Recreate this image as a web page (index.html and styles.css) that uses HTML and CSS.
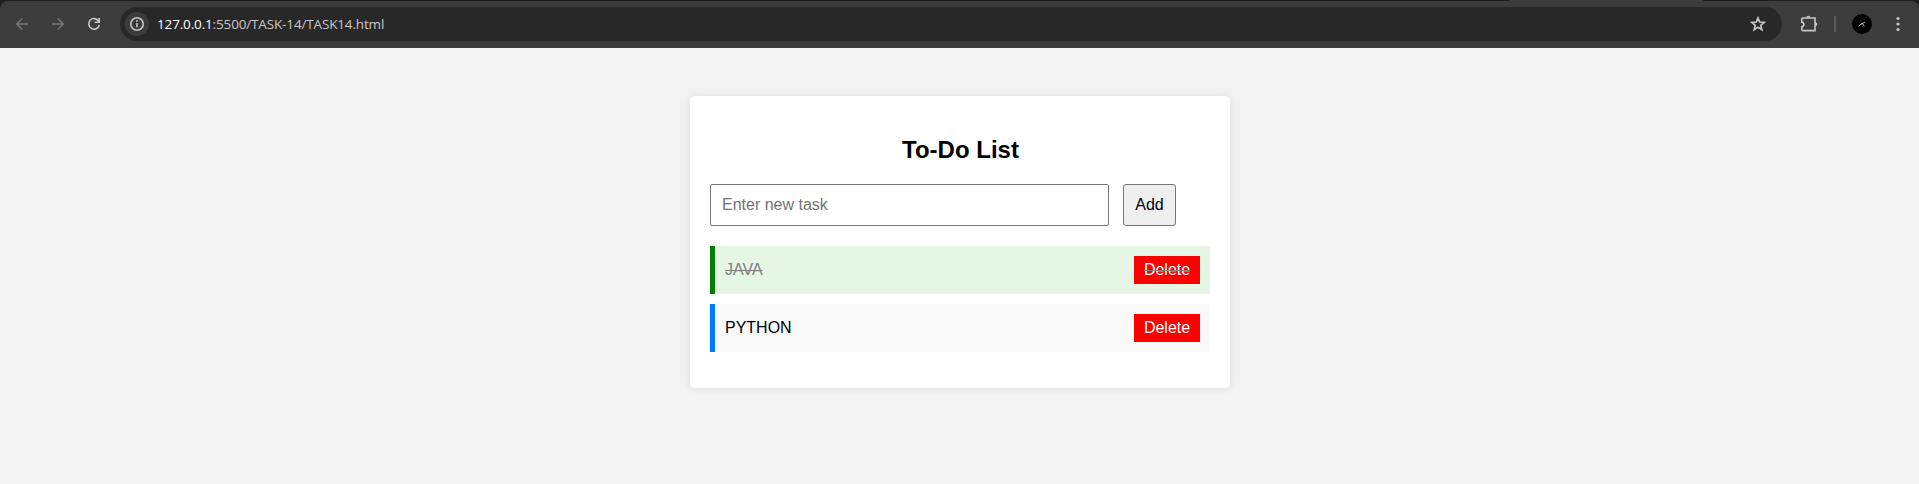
FILE: index.html
```
<!DOCTYPE html>
<html lang="en">
<head>
<meta charset="utf-8">
<title>To-Do List</title>
<link rel="stylesheet" href="styles.css">
</head>
<body>
<div class="frame">
<header class="toolbar">
  <nav class="nav">
    <svg class="dim" width="36" height="36" viewBox="0 0 36 36"><path d="M24 18H13M18.300 12.500L12.800 18l5.500 5.500"/></svg>
    <svg class="dim" width="36" height="36" viewBox="0 0 36 36"><path d="M12 18h11M17.700 12.500L23.200 18l-5.500 5.500"/></svg>
    <svg class="lit" width="36" height="36" viewBox="0 0 36 36"><path d="M22.600 15.200A5.300 5.300 0 1 0 23.200 19M23.200 12v4.300h-4.500"/></svg>
  </nav>
  <div class="address">
    <span class="info"><svg class="lit" width="24" height="24" viewBox="0 0 24 24"><circle cx="12" cy="12" r="6.200"/><path d="M12 11v4.200M12 8v1.700"/></svg></span>
    <span class="url"><b class="host">127.0.0.1</b>:5500/TASK-14/TASK14.html</span>
    <svg class="star lit" width="18" height="18" viewBox="0 0 18 18"><path d="M9 2.900l1.700 4.200 4.500.3-3.500 2.900 1.200 4.400L9 12.300l-3.900 2.400 1.200-4.400-3.500-2.900 4.500-.3z"/></svg>
  </div>
  <div class="actions">
    <svg class="lit" width="20" height="20" viewBox="0 0 20 20"><path d="M3.800 4H16v12.600H3.800a1 1 0 0 1-1-1v-2.800c2.800-.4 2.800-4.200 0-4.600V5a1 1 0 0 1 1-1z"/><path class="fill" d="M7.300 3.700a2 2 0 0 1 4 0zM16.200 8.300a2 2 0 0 1 0 4z"/></svg>
    <span class="divider"></span>
    <span class="avatar"><svg width="20" height="20" viewBox="0 0 20 20"><path d="M6.500 12.200l2.500-2 3.800-2M9 9.500l2 .7 1.300 2"/></svg></span>
    <svg class="menu" width="6" height="18" viewBox="0 0 6 18"><circle cx="3" cy="3.500" r="1.600"/><circle cx="3" cy="9" r="1.600"/><circle cx="3" cy="14.500" r="1.600"/></svg>
  </div>
</header>
</div>
<main class="card">
  <h2 class="title">To-Do List</h2>
  <div class="entry">
    <input class="task-input" type="text" placeholder="Enter new task">
    <button class="add">Add</button>
  </div>
  <ul class="tasks">
    <li class="task done"><span class="name">JAVA</span><button class="delete">Delete</button></li>
    <li class="task"><span class="name">PYTHON</span><button class="delete">Delete</button></li>
  </ul>
</main>
</body>
</html>
```
FILE: styles.css
```
* { box-sizing: border-box; }
body {
  margin: 0;
  height: 484px;
  overflow: hidden;
  background: #f3f3f3;
  font: 16px "Liberation Sans", Arial, sans-serif;
}
.frame {
  height: 48px;
  padding-top: 1px;
  background: linear-gradient(90deg, #1f1f1f 1509px, #3c3c3c 1509px 1703px, #1f1f1f 1703px);
}
.toolbar {
  display: flex;
  align-items: center;
  height: 47px;
  padding: 0 18px 1px 4px;
  background: #3c3c3c;
  border-radius: 8px 8px 0 0;
}
.nav { display: flex; width: 116px; }
.nav svg { flex: none; }
svg { display: block; fill: none; stroke-width: 1.6; }
.dim { stroke: #777; }
.lit { stroke: #c7c7c7; }
.fill { fill: #c7c7c7; stroke: none; }
.address {
  display: flex;
  align-items: center;
  width: 1662px;
  height: 34px;
  padding: 0 15px 0 5px;
  border-radius: 17px;
  background: #282828;
}
.info {
  display: grid;
  place-items: center;
  width: 24px;
  height: 24px;
  border-radius: 50%;
  background: #3c3c3c;
}
.url {
  flex: 1;
  margin-left: 8px;
  color: #c7c7c7;
  font: 13.5px "Open Sans", "Noto Sans", sans-serif;
  letter-spacing: -.15px;
  white-space: nowrap;
}
.host { font-weight: 400; color: #fff; }
.actions { display: flex; align-items: center; margin-left: 17px; }
.divider { width: 2px; height: 16px; margin-left: 15px; background: #5c5c5c; }
.avatar { width: 20px; height: 20px; margin-left: 16px; border-radius: 50%; background: #000; }
.avatar svg { stroke: #bbb; stroke-width: 1; }
.menu { margin-left: 23px; fill: #c7c7c7; }
.card {
  width: 540px;
  height: 292px;
  margin: 48px 0 0 690px;
  padding: 20px;
  border-radius: 5px;
  background: #fff;
  box-shadow: 0 0 10px rgba(0, 0, 0, .1);
}
.title { margin: 20px 0; padding-left: 1px; font-size: 24px; line-height: 28px; text-align: center; }
.entry { display: flex; gap: 14px; }
.task-input {
  width: 399px;
  height: 42px;
  padding: 10px 11px;
  border: 1px solid #767676;
  border-radius: 2px;
  font: inherit;
}
.task-input::placeholder { color: #757575; }
.add {
  width: 53px;
  height: 42px;
  padding: 0 0 1px;
  border: 1px solid #767676;
  border-radius: 3px;
  background: #efefef;
  color: #000;
  font: inherit;
}
.tasks { display: grid; gap: 10px; margin: 20px 0 0; padding: 0; list-style: none; }
.task {
  display: flex;
  justify-content: space-between;
  height: 48px;
  padding: 10px;
  border-left: 5px solid #007bff;
  background: #f9f9f9;
  line-height: 27px;
}
.done { border-color: green; background: #e6f6e4; color: gray; }
.done .name { text-decoration: line-through; }
.delete {
  position: relative;
  width: 66px;
  height: 28px;
  padding: 0 0 1px;
  border: 0;
  background: red;
  color: #fff;
  font: inherit;
  line-height: 26px;
}
/* Strike across the label of a completed task's button */
.done .delete::after {
  content: "";
  position: absolute;
  top: 14px;
  left: 10px;
  width: 46px;
  height: 1px;
  background: gray;
}
```
